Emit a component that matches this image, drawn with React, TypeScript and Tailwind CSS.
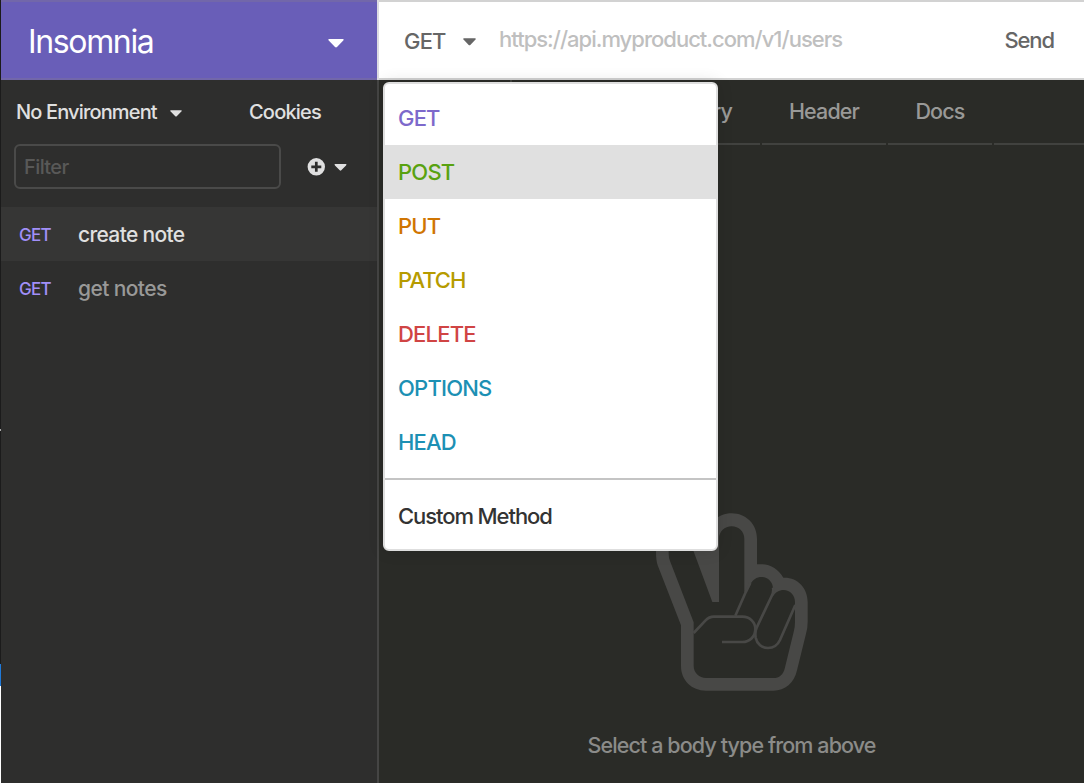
const METHODS = [
  { name: 'GET', color: 'text-[#7d69cb]', spacing: 'tracking-[-0.8px]' },
  { name: 'POST', color: 'text-[#59a210]', spacing: 'tracking-[-0.8px]', active: true },
  { name: 'PUT', color: 'text-[#d07502]', spacing: 'tracking-[-0.8px]' },
  { name: 'PATCH', color: 'text-[#b69b00]', spacing: 'tracking-[-1px]' },
  { name: 'DELETE', color: 'text-[#d04444]', spacing: 'tracking-[-0.8px]' },
  { name: 'OPTIONS', color: 'text-[#1c90b4]', spacing: 'tracking-[-0.8px]' },
  { name: 'HEAD', color: 'text-[#1c90b4]', spacing: 'tracking-[-0.8px]' },
];

function Caret({ className }: { className: string }) {
  return (
    <svg viewBox="0 0 16 9" className={className} fill="currentColor" aria-hidden="true">
      <path d="M1.1 0H14.9Q16 .1 15.6 1.1Q15.4 1.6 14.8 2.1L9 8.1Q8 9 7 8.1L1.2 2.1Q.6 1.6 .4 1.1Q0 .1 1.1 0Z" />
    </svg>
  );
}

function PeaceHand() {
  return (
    <svg viewBox="48 38 456 534" className="h-[178px] w-[152px]" aria-hidden="true">
      <path
        fill="#484846"
        d="M48 155C48 100 180 60 200 115C200 70 235 39 275 39C318 39 351 72 351 115V192H365C393 192 416 208 430 232C472 230 503 262 503 305V365Q503 385 498 400L471 510C463 548 435 571 400 571H198C155 571 123 540 123 497V375L53 195Q48 180 48 155Z"
      />
      <path
        fill="#2a2b27"
        d="M86 148V160Q86 172 90 182L161 366V497C161 517 178 533 198 533H400C418 533 430 522 434 505L461 395Q465 382 465 365V305C465 285 450 269 431 269C417 269 406 276 399 288L399 265C399 245 384 230 365 230C350 230 338 238 331 252L319 275H313V115C313 94 296 78 275 78C254 78 237 94 237 115V305H217L159 148Z"
      />
      <g fill="none" stroke="#484846" strokeWidth="8">
        <path d="M161 398L196 361Q207 349 222 349H307C330 349 346 366 346 386C346 408 330 425 307 425H246" />
        <path d="M331 248L317 276L286 346" />
        <path d="M399 262Q402 274 395 287L350 382C344 394 346 405 347 412C351 431 366 443 384 443C400 443 413 434 420 419L466 314" />
      </g>
    </svg>
  );
}

function Sidebar() {
  return (
    <aside className="flex w-[376px] shrink-0 flex-col bg-[#2e2e2d] font-[450] text-[#e0e0e0]">
      <header className="flex h-20 items-center justify-between border-t-2 border-b-2 border-[#7267aa] bg-[#695eb8] pr-[33px] pl-[27px] text-white">
        <h1 className="pt-[3px] text-[32px] leading-10 font-normal tracking-[-1.35px]">Insomnia</h1>
        <Caret className="mt-[7px] h-[9px] w-4" />
      </header>
      <div className="flex h-[64px] items-center pl-[15px] text-[20px]">
        <button className="flex w-[233px] items-center gap-[13px]">
          <span className="tracking-[-0.85px]">No Environment</span>
          <Caret className="mt-0.5 h-[7px] w-3" />
        </button>
        <button className="tracking-[-0.8px]">Cookies</button>
      </div>
      <div className="flex h-[63px] items-start pl-[13px]">
        <input
          placeholder="Filter"
          className="h-[45px] w-[267px] rounded-md border-2 border-[#4a4a49] bg-transparent px-2 text-[20px] tracking-[-0.6px] outline-none placeholder:text-[#595958]"
        />
        <button className="mt-[14px] ml-[26px] flex items-center gap-[9px]">
          <svg viewBox="0 0 18 18" className="h-[18px] w-[18px]" aria-hidden="true">
            <circle cx="9.3" cy="8.8" r="8.7" fill="#e0e0e0" />
            <path d="M9.3 3.8V13.8M4.3 8.8H14.3" stroke="#2e2e2d" strokeWidth="2.7" />
          </svg>
          <Caret className="h-[7px] w-[13px]" />
        </button>
      </div>
      <ul>
        <li className="flex h-[54px] items-center bg-[#363635] pt-0.5 pl-[18px]">
          <span className="w-[59px] pt-0.5 text-[17px] tracking-[-0.7px] text-[#a18ff8]">GET</span>
          <span className="text-[21px] tracking-[-0.67px]">create note</span>
        </li>
        <li className="flex h-[54px] items-center pt-0.5 pl-[18px]">
          <span className="w-[59px] pt-0.5 text-[17px] tracking-[-0.7px] text-[#a18ff8]">GET</span>
          <span className="text-[21px] tracking-[-0.6px] text-[#999998]">get notes</span>
        </li>
      </ul>
    </aside>
  );
}

function MethodMenu() {
  return (
    <div className="absolute top-[82px] left-[4px] z-10 h-[469px] w-[335px] rounded-[6px] border-2 border-[#dedede] bg-white pt-[7px] text-[22px] font-[450] shadow-[0_0_16px_rgba(0,0,0,0.12)]">
      {METHODS.map((m) => (
        <div
          key={m.name}
          className={`flex h-[54px] items-center pl-[13px] ${m.color} ${m.spacing} ${m.active ? 'bg-[#e0e0e0]' : ''}`}
        >
          {m.name}
        </div>
      ))}
      <div className="mt-[9px] mb-[9px] h-0.5 bg-[#c4c4c4]" />
      <div className="flex h-[54px] items-center pl-[13px] tracking-[-1.08px] text-[#333]">Custom Method</div>
    </div>
  );
}

export default function App() {
  return (
    <div className="flex h-[783px] w-[1084px] overflow-hidden bg-[#2a2b27] font-['Inter','Liberation_Sans',sans-serif]">
      <div className="flex w-px shrink-0 flex-col bg-[#1b1b1b]">
        <div className="mt-[429px] h-0.5 bg-[#aaa]" />
        <div className="mt-[233px] h-[22px] bg-[#1f79d8]" />
        <div className="flex-1 bg-white" />
      </div>
      <Sidebar />
      <div className="flex w-0.5 shrink-0 flex-col">
        <div className="h-20 bg-[#dcdbe2]" />
        <div className="flex-1 bg-[#454544]" />
      </div>
      <main className="relative flex flex-1 flex-col">
        <div className="flex h-20 items-center border-t-2 border-b-2 border-[#d2d2d2] bg-white pl-[25px] text-[22px] font-[450] text-[#666]">
          <button className="flex w-[95px] items-center gap-[17px] pt-0.5">
            <span className="tracking-[-0.8px]">GET</span>
            <Caret className="mt-0.5 h-2 w-[13px]" />
          </button>
          <span className="flex-1 pb-px tracking-[-0.99px] text-[#bfbfbf]">https://api.myproduct.com/v1/users</span>
          <button className="pr-[30px] tracking-[-1.1px]">Send</button>
        </div>
        <nav className="flex h-[65px] gap-0.5 text-[21.5px] font-[450] tracking-[-0.85px] text-[#999997]">
          <div className="w-[133px] border-r-2 border-[#41423f]" />
          <div className="w-[122px] border-b-2 border-[#41423f]" />
          <div className="flex w-[122px] items-center justify-end border-b-2 border-[#41423f] pr-7">Query</div>
          <div className="flex w-[124px] items-center justify-center border-b-2 border-[#41423f]">Header</div>
          <div className="flex w-[104px] items-center justify-center border-b-2 border-[#41423f]">Docs</div>
          <div className="flex-1 border-b-2 border-[#41423f]" />
        </nav>
        <section className="flex flex-1 flex-col items-center pt-[368px]">
          <PeaceHand />
          <p className="mt-[38px] text-[21.5px] leading-8 font-[450] tracking-[-0.9px] whitespace-nowrap text-[#8b8b89]">
            Select a body type from above
          </p>
        </section>
        <MethodMenu />
      </main>
    </div>
  );
}
